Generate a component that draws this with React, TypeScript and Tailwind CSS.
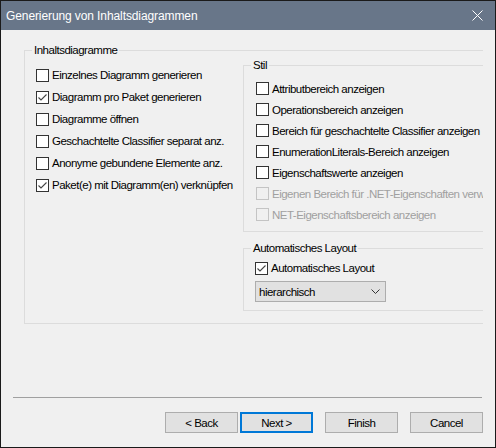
import React from 'react';

const font = { fontFamily: '"Liberation Sans", Arial, sans-serif' };

interface CheckProps {
  label: string;
  checked?: boolean;
  disabled?: boolean;
  rowClass?: string;
}

function Check({ label, checked, disabled, rowClass = 'h-[22px]' }: CheckProps) {
  return (
    <div className={`flex items-center gap-[3px] whitespace-nowrap ${rowClass}`}>
      <span
        className={`flex h-[13px] w-[13px] shrink-0 items-center justify-center border ${
          disabled ? 'border-[#c4c4c4] bg-[#f0f0f0]' : 'border-[#333333] bg-white'
        }`}
      >
        {checked && (
          <svg width="11" height="11" viewBox="0 0 11 11">
            <path d="M1.5 5.5 L4 8 L9.5 2.5" fill="none" stroke="#444444" strokeWidth="1.1" />
          </svg>
        )}
      </span>
      <span className={disabled ? 'text-[#a0a0a0]' : 'text-black'}>{label}</span>
    </div>
  );
}

function Button({ label, focused }: { label: string; focused?: boolean }) {
  return (
    <button
      className={`h-[21px] w-[73px] bg-[#e1e1e1] text-black ${
        focused ? 'border-2 border-[#0078d7]' : 'border border-[#adadad]'
      }`}
    >
      {label}
    </button>
  );
}

export default function App() {
  return (
    <div
      style={font}
      className="flex h-[448px] w-[496px] flex-col border border-[#1a1a1a] bg-[#f0f0f0] text-[11.5px] leading-[14px] tracking-[-0.5px]"
    >
      {/* title bar */}
      <div className="flex h-[29px] shrink-0 items-center justify-between bg-[#687689] pl-[5px] pr-[12px]">
        <span className="text-[12px] tracking-[-0.1px] text-white">Generierung von Inhaltsdiagrammen</span>
        <svg width="11" height="11" viewBox="0 0 11 11">
          <path d="M0.5 0.5 L10.5 10.5 M10.5 0.5 L0.5 10.5" stroke="white" strokeWidth="1" />
        </svg>
      </div>

      <div className="flex flex-1 flex-col">
        {/* content group, clipped on the right */}
        <div className="ml-[23px] mt-[13px] w-[459px] overflow-hidden">
          <fieldset className="m-0 w-[490px] border border-[#dcdcdc] p-0 pb-[12px]">
            <legend className="ml-[7px] px-[2px] leading-[14px]">Inhaltsdiagramme</legend>
            <div className="flex">
              <div className="mt-[7px] w-[218px] shrink-0 pl-[11px]">
                <Check label="Einzelnes Diagramm generieren" />
                <Check label="Diagramm pro Paket generieren" checked />
                <Check label="Diagramme öffnen" />
                <Check label="Geschachtelte Classifier separat anz." />
                <Check label="Anonyme gebundene Elemente anz." />
                <Check label="Paket(e) mit Diagramm(en) verknüpfen" checked />
              </div>
              <div className="mt-[1px] flex-1">
                <fieldset className="m-0 border border-[#dcdcdc] p-0 pb-[6px] pt-[6px]">
                  <legend className="ml-[7px] px-[2px] leading-[14px]">Stil</legend>
                  <div className="pl-[12px]">
                    <Check rowClass="h-[21px]" label="Attributbereich anzeigen" />
                    <Check rowClass="h-[21px]" label="Operationsbereich anzeigen" />
                    <Check rowClass="h-[21px]" label="Bereich für geschachtelte Classifier anzeigen" />
                    <Check rowClass="h-[21px]" label="EnumerationLiterals-Bereich anzeigen" />
                    <Check rowClass="h-[21px]" label="Eigenschaftswerte anzeigen" />
                    <Check rowClass="h-[21px]" label="Eigenen Bereich für .NET-Eigenschaften verwenden" disabled />
                    <Check rowClass="h-[21px]" label="NET-Eigenschaftsbereich anzeigen" disabled />
                  </div>
                </fieldset>
                <fieldset className="m-0 mt-[9px] border border-[#dcdcdc] p-0 pb-[8px] pt-[3px]">
                  <legend className="ml-[7px] px-[2px] leading-[14px]">Automatisches Layout</legend>
                  <div className="pl-[11px]">
                    <Check rowClass="h-[20px]" label="Automatisches Layout" checked />
                    <div className="mt-[3px] flex h-[21px] w-[131px] items-center justify-between border border-[#adadad] bg-[#e1e1e1] pl-[3px] pr-[5px]">
                      <span>hierarchisch</span>
                      <svg width="9" height="5" viewBox="0 0 9 5">
                        <path d="M0.5 0.5 L4.5 4.5 L8.5 0.5" fill="none" stroke="#333333" strokeWidth="1" />
                      </svg>
                    </div>
                  </div>
                </fieldset>
              </div>
            </div>
          </fieldset>
        </div>

        {/* separator */}
        <div className="ml-[12px] mt-[73px] h-px w-[469px] bg-[#a0a0a0]" />

        {/* buttons */}
        <div className="mr-[12px] mt-[14px] flex justify-end">
          <div className="flex gap-[2px]">
            <Button label="< Back" />
            <Button label="Next >" focused />
          </div>
          <div className="ml-[12px]">
            <Button label="Finish" />
          </div>
          <div className="ml-[12px]">
            <Button label="Cancel" />
          </div>
        </div>
      </div>
    </div>
  );
}
